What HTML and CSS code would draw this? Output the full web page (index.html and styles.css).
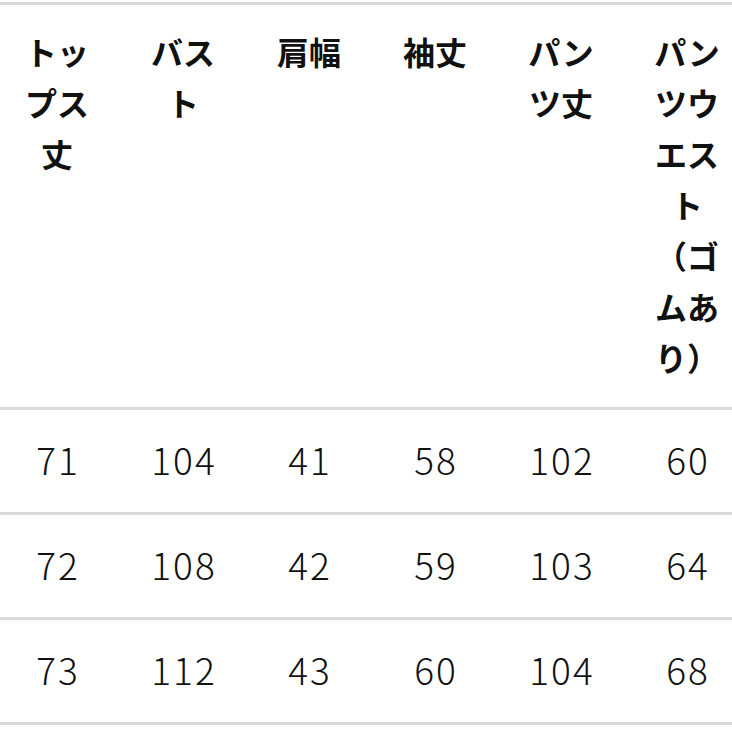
FILE: index.html
```html
<!DOCTYPE html>
<html lang="ja">
<head>
<meta charset="utf-8">
<link rel="stylesheet" href="styles.css">
</head>
<body>
<table class="size-table">
  <thead>
    <tr>
      <th>トップス丈</th>
      <th>バスト</th>
      <th>肩幅</th>
      <th>袖丈</th>
      <th>パンツ丈</th>
      <th>パンツウエスト（ゴムあり）</th>
    </tr>
  </thead>
  <tbody>
    <tr><td>71</td><td>104</td><td>41</td><td>58</td><td>102</td><td>60</td></tr>
    <tr><td>72</td><td>108</td><td>42</td><td>59</td><td>103</td><td>64</td></tr>
    <tr><td>73</td><td>112</td><td>43</td><td>60</td><td>104</td><td>68</td></tr>
  </tbody>
</table>
</body>
</html>
```
FILE: styles.css
```css
html, body {
  margin: 0;
  padding: 0;
  background: #ffffff;
  overflow: hidden;
}
body {
  padding-top: 2px;
}
.size-table {
  width: 756px;
  margin-left: -6px;
  border-collapse: collapse;
  table-layout: fixed;
  color: #111111;
  font-family: "Noto Sans CJK JP", "Noto Sans", sans-serif;
}
.size-table th {
  border-top: 3px solid #dadada;
  border-bottom: 3px solid #dadada;
  padding: 21px 22px 24px;
  font-size: 32px;
  line-height: 51px;
  font-weight: 700;
  text-align: center;
  vertical-align: top;
  line-break: strict;
}
.size-table td {
  border-bottom: 3px solid #dadada;
  height: 97px;
  padding: 0 0 5px 2px;
  font-size: 37px;
  font-weight: 300;
  letter-spacing: 2px;
  text-align: center;
  vertical-align: middle;
}
```
